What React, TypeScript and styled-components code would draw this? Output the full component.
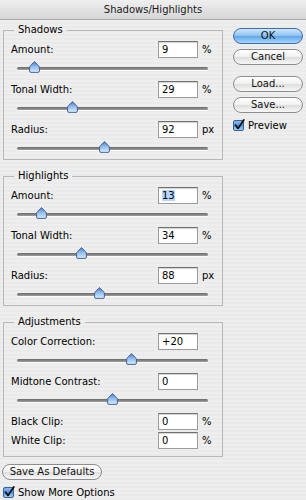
import React, { useId } from 'react';
import styled, { createGlobalStyle } from 'styled-components';

const GlobalStyle = createGlobalStyle`
  html, body {
    margin: 0;
    padding: 0;
  }
  body {
    width: 306px;
    height: 500px;
    overflow: hidden;
    font-family: 'DejaVu Sans', sans-serif;
    font-size: 10px;
    color: #000;
    background: repeating-linear-gradient(to bottom, #eeeeee 0 2px, #eaeaea 2px 4px);
  }
`;

const TitleBar = styled.div`
  height: 20px;
  display: flex;
  align-items: center;
  justify-content: center;
  background: linear-gradient(to bottom, #efefef, #d6d6d6);
  border-bottom: 1px solid #aaaaaa;
  box-sizing: border-box;
  font-size: 10px;
  color: #1a1a1a;
`;

const Main = styled.div`
  display: flex;
  padding: 3px 0 0 3px;
`;

const LeftColumn = styled.div`
  width: 220px;
  display: flex;
  flex-direction: column;
`;

const RightColumn = styled.div`
  width: 70px;
  margin-left: 10px;
  padding-top: 5px;
  display: flex;
  flex-direction: column;
`;

const Group = styled.fieldset<{ $bottom?: number }>`
  margin: 0;
  padding: 4px 2px ${(p) => p.$bottom ?? 0}px 7px;
  border: 1px solid #b8b8b8;
  min-inline-size: 0;
  & + & {
    margin-top: 9px;
  }
`;

const Legend = styled.legend`
  margin-left: 3px;
  padding: 0 4px;
  font-size: 10px;
  line-height: 14px;
`;

const FieldRow = styled.div<{ $gap?: number }>`
  display: flex;
  align-items: center;
  height: 17px;
  margin-top: ${(p) => p.$gap ?? 0}px;
`;

const Label = styled.div`
  flex: 1;
`;

const Field = styled.div`
  width: 40px;
  height: 17px;
  box-sizing: border-box;
  border: 1px solid #9c9c9c;
  border-top-color: #707070;
  background: #fff;
  box-shadow: inset 0 1px 1px rgba(0, 0, 0, 0.18);
  padding: 0 3px;
  line-height: 15px;
`;

const Selected = styled.span`
  background: #b5d5ff;
`;

const Unit = styled.div`
  width: 18px;
  margin-left: 4px;
`;

const SliderRow = styled.div`
  height: 21px;
  display: flex;
  align-items: center;
  padding: 0 12px 0 6px;
`;

const Track = styled.div`
  position: relative;
  flex: 1;
  height: 3px;
  border-radius: 2px;
  background: linear-gradient(to bottom, #6a6a6a, #9d9d9d);
  box-shadow: 0 1px 0 rgba(255, 255, 255, 0.8);
`;

const ThumbWrap = styled.div`
  position: absolute;
  top: -6px;
  width: 11px;
  height: 12px;
  margin-left: -5.5px;
`;

const Button = styled.div<{ $primary?: boolean; $gap?: number }>`
  height: 16px;
  box-sizing: border-box;
  margin-top: ${(p) => p.$gap ?? 0}px;
  border-radius: 8px;
  border: 1px solid ${(p) => (p.$primary ? '#3f6ea8' : '#8d8d8d')};
  background: ${(p) =>
    p.$primary
      ? 'linear-gradient(to bottom, #cfe7fc 0%, #8cc2f2 48%, #62a7ea 52%, #a6d7fb 100%)'
      : 'linear-gradient(to bottom, #ffffff 0%, #f0f0f0 48%, #dedede 52%, #f7f7f7 100%)'};
  display: flex;
  align-items: center;
  justify-content: center;
  font-size: 10px;
  line-height: 14px;
  color: #111;
`;

const DefaultsButton = styled(Button)`
  width: 100px;
  margin-left: -1px;
`;

const CheckRow = styled.div<{ $gap?: number }>`
  display: flex;
  align-items: center;
  height: 12px;
  margin-top: ${(p) => p.$gap ?? 0}px;
  gap: 2px;
`;

const Thumb = () => {
  const id = useId();
  return (
    <svg width="11" height="12" viewBox="0 0 11 12">
      <defs>
        <linearGradient id={id} x1="0" y1="0" x2="0" y2="1">
          <stop offset="0" stopColor="#4f77c0" />
          <stop offset="0.45" stopColor="#8fbcee" />
          <stop offset="1" stopColor="#d9eeff" />
        </linearGradient>
      </defs>
      <path
        d="M5.5 0.6 C4.4 1.8 1.3 4.4 0.6 6 L0.6 10 Q0.6 11.4 2 11.4 L9 11.4 Q10.4 11.4 10.4 10 L10.4 6 C9.7 4.4 6.6 1.8 5.5 0.6 Z"
        fill={`url(#${id})`}
        stroke="#3f5789"
        strokeWidth="0.9"
      />
    </svg>
  );
};

const CheckBox = () => {
  const id = useId();
  return (
    <svg width="13" height="12" viewBox="0 0 13 12">
      <defs>
        <linearGradient id={id} x1="0" y1="0" x2="0" y2="1">
          <stop offset="0" stopColor="#8fc0f3" />
          <stop offset="0.5" stopColor="#4f95e3" />
          <stop offset="1" stopColor="#a9d8fc" />
        </linearGradient>
      </defs>
      <rect x="0.5" y="1.5" width="10" height="10" rx="1.5" fill={`url(#${id})`} stroke="#3d5f95" />
      <path d="M2.6 6.3 L5 9.4 L10.8 1" stroke="#111" strokeWidth="1.8" fill="none" strokeLinecap="round" strokeLinejoin="round" />
    </svg>
  );
};

interface FieldProps {
  label: string;
  value: string;
  unit?: string;
  selected?: boolean;
  gap?: number;
}

const ValueRow = ({ label, value, unit, selected, gap }: FieldProps) => (
  <FieldRow $gap={gap}>
    <Label>{label}</Label>
    <Field>{selected ? <Selected>{value}</Selected> : value}</Field>
    <Unit>{unit}</Unit>
  </FieldRow>
);

const Slider = ({ pos }: { pos: number }) => (
  <SliderRow>
    <Track>
      <ThumbWrap style={{ left: `${pos}%` }}>
        <Thumb />
      </ThumbWrap>
    </Track>
  </SliderRow>
);

interface Control {
  label: string;
  value: string;
  unit?: string;
  pos: number;
  selected?: boolean;
}

const shadows: Control[] = [
  { label: 'Amount:', value: '9', unit: '%', pos: 9 },
  { label: 'Tonal Width:', value: '29', unit: '%', pos: 29 },
  { label: 'Radius:', value: '92', unit: 'px', pos: 46 },
];

const highlights: Control[] = [
  { label: 'Amount:', value: '13', unit: '%', pos: 13, selected: true },
  { label: 'Tonal Width:', value: '34', unit: '%', pos: 34 },
  { label: 'Radius:', value: '88', unit: 'px', pos: 43 },
];

const adjustments: Control[] = [
  { label: 'Color Correction:', value: '+20', pos: 60 },
  { label: 'Midtone Contrast:', value: '0', pos: 50 },
];

const SliderGroup = ({ title, items }: { title: string; items: Control[] }) => (
  <Group>
    <Legend>{title}</Legend>
    {items.map((c, i) => (
      <React.Fragment key={c.label}>
        <ValueRow label={c.label} value={c.value} unit={c.unit} selected={c.selected} gap={i ? 2 : 0} />
        <Slider pos={c.pos} />
      </React.Fragment>
    ))}
  </Group>
);

export default function App() {
  return (
    <>
      <GlobalStyle />
      <TitleBar>Shadows/Highlights</TitleBar>
      <Main>
        <LeftColumn>
          <SliderGroup title="Shadows" items={shadows} />
          <SliderGroup title="Highlights" items={highlights} />
          <Group $bottom={7}>
            <Legend>Adjustments</Legend>
            {adjustments.map((c, i) => (
              <React.Fragment key={c.label}>
                <ValueRow label={c.label} value={c.value} gap={i ? 2 : 0} />
                <Slider pos={c.pos} />
              </React.Fragment>
            ))}
            <ValueRow label="Black Clip:" value="0" unit="%" gap={2} />
            <ValueRow label="White Clip:" value="0" unit="%" gap={2} />
          </Group>
          <DefaultsButton $gap={7}>Save As Defaults</DefaultsButton>
          <CheckRow $gap={6}>
            <CheckBox />
            <span>Show More Options</span>
          </CheckRow>
        </LeftColumn>
        <RightColumn>
          <Button $primary>OK</Button>
          <Button $gap={5}>Cancel</Button>
          <Button $gap={11}>Load...</Button>
          <Button $gap={5}>Save...</Button>
          <CheckRow $gap={6}>
            <CheckBox />
            <span>Preview</span>
          </CheckRow>
        </RightColumn>
      </Main>
    </>
  );
}
